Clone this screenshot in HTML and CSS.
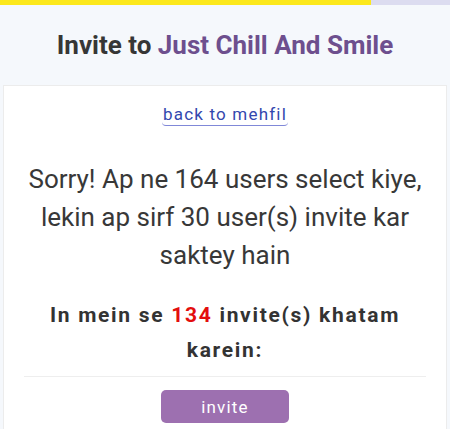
FILE: index.html
```html
<!DOCTYPE html>
<html lang="en">
  <head>
    <meta charset="UTF-8" />
    <meta name="viewport" content="width=device-width, initial-scale=1.0" />
    <title>Invite</title>
    <link rel="stylesheet" href="styles.css">
  </head>
  <body>
    <div class="progress"><div class="progress-fill"></div></div>
    <div class="header">
      <h1>Invite to <span class="group-name">Just Chill And Smile</span></h1>
    </div>
    <div class="card">
      <div class="back-row">
        <a class="back-link" href="#">back to mehfil</a>
      </div>
      <p class="sorry">Sorry! Ap ne 164 users select kiye, lekin ap sirf 30 user(s) invite kar saktey hain</p>
      <p class="remove">In mein se <span class="count">134</span> invite(s) khatam karein:</p>
      <div class="actions">
        <button class="invite-btn">invite</button>
      </div>
    </div>
  </body>
</html>
```

FILE: styles.css
```css
* {
  margin: 0;
  padding: 0;
  box-sizing: border-box;
}
body {
  font-family: Roboto, "Liberation Sans", sans-serif;
  background: #f5f8fc;
  color: #333;
}
.progress {
  height: 5px;
  background: #dcdcf0;
}
.progress-fill {
  width: 371px;
  height: 100%;
  background: #fce81c;
}
.header {
  height: 80px;
  display: flex;
  align-items: center;
  justify-content: center;
}
.header h1 {
  font-size: 26px;
  font-weight: 700;
  color: #363636;
}
.group-name {
  color: #6d4f8e;
}
.card {
  margin: 0 3px;
  background: #fff;
  border: 1px solid #ececec;
  border-bottom: none;
  padding: 17px 20px 6px;
  text-align: center;
}
.back-row {
  height: 27px;
}
.back-link {
  display: inline-block;
  font-size: 17px;
  letter-spacing: 1.2px;
  color: #3347ae;
  text-decoration: none;
  padding: 1px 1px 1px;
  border-bottom: 1px solid #8088d8;
  border-radius: 4px;
}
.sorry {
  font-size: 26px;
  line-height: 38px;
  color: #383838;
  margin: 30px 4px 0;
}
.remove {
  font-size: 21px;
  font-weight: 700;
  letter-spacing: 1.7px;
  line-height: 35px;
  color: #333;
  margin: 24px 0 0;
  padding: 0 10px 8px;
  border-bottom: 1px solid #eee;
}
.count {
  color: #e30e0e;
}
.actions {
  padding-top: 13px;
}
.invite-btn {
  width: 128px;
  height: 33px;
  border: none;
  border-radius: 5px;
  background: #9d70b0;
  color: #fff;
  font-family: Roboto, "Liberation Sans", sans-serif;
  font-size: 17px;
  letter-spacing: 1.2px;
}
```
